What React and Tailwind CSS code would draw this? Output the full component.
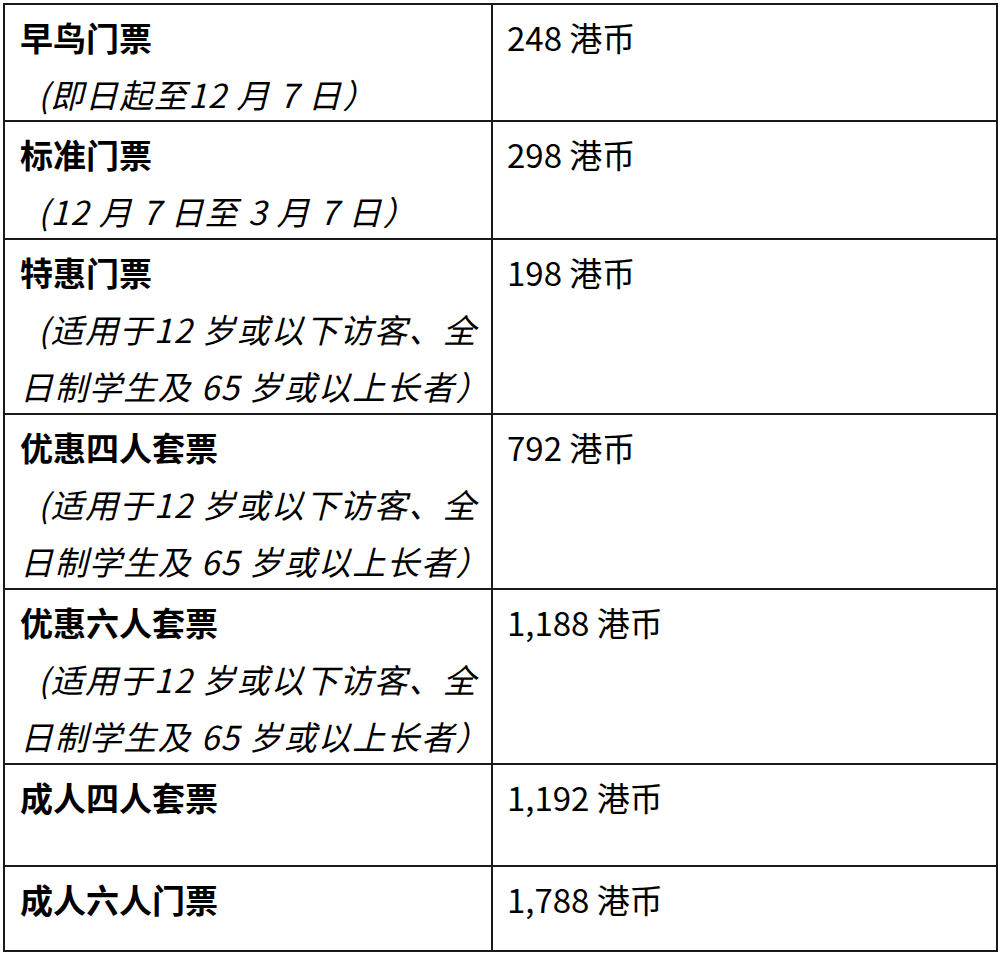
import React from 'react';

const rows = [
  { title: '早鸟门票', note: ['(即日起至12 月 7 日）'], price: '248 港币', h: 'h-[117px]' },
  { title: '标准门票', note: ['(12 月 7 日至 3 月 7 日）'], price: '298 港币', h: 'h-[118px]' },
  { title: '特惠门票', note: ['(适用于12 岁或以下访客、全', '日制学生及 65 岁或以上长者）'], price: '198 港币', h: 'h-[175px]' },
  { title: '优惠四人套票', note: ['(适用于12 岁或以下访客、全', '日制学生及 65 岁或以上长者）'], price: '792 港币', h: 'h-[175px]' },
  { title: '优惠六人套票', note: ['(适用于12 岁或以下访客、全', '日制学生及 65 岁或以上长者）'], price: '1,188 港币', h: 'h-[175px]' },
  { title: '成人四人套票', note: [], price: '1,192 港币', h: 'h-[102px]' },
  { title: '成人六人门票', note: [], price: '1,788 港币', h: 'h-[83px]' },
];

export default function App() {
  return (
    <div className="w-[1000px] h-[956px] bg-white pt-[3px] pl-[3px] font-['Noto_Sans_CJK_SC',sans-serif] text-[33px] text-black leading-[57px]">
      <div className="w-[995px] border-2 border-[#1a1a1a] flex flex-col">
        {rows.map((r, idx) => (
          <div
            key={r.title}
            className={`flex ${r.h} ${idx < rows.length - 1 ? 'border-b-2 border-[#1a1a1a]' : ''}`}
          >
            <div className="w-[488px] shrink-0 border-r-2 border-[#1a1a1a] pl-[15px] pt-[4px]">
              <div className="font-bold">{r.title}</div>
              {r.note.map((line, i) => (
                <div key={i} className={`italic whitespace-nowrap tracking-[1.4px] ${i === 0 ? 'pl-[18px]' : ''}`}>{line}</div>
              ))}
            </div>
            <div className="flex-1 pl-[14px] pt-[4px]">{r.price}</div>
          </div>
        ))}
      </div>
    </div>
  );
}
